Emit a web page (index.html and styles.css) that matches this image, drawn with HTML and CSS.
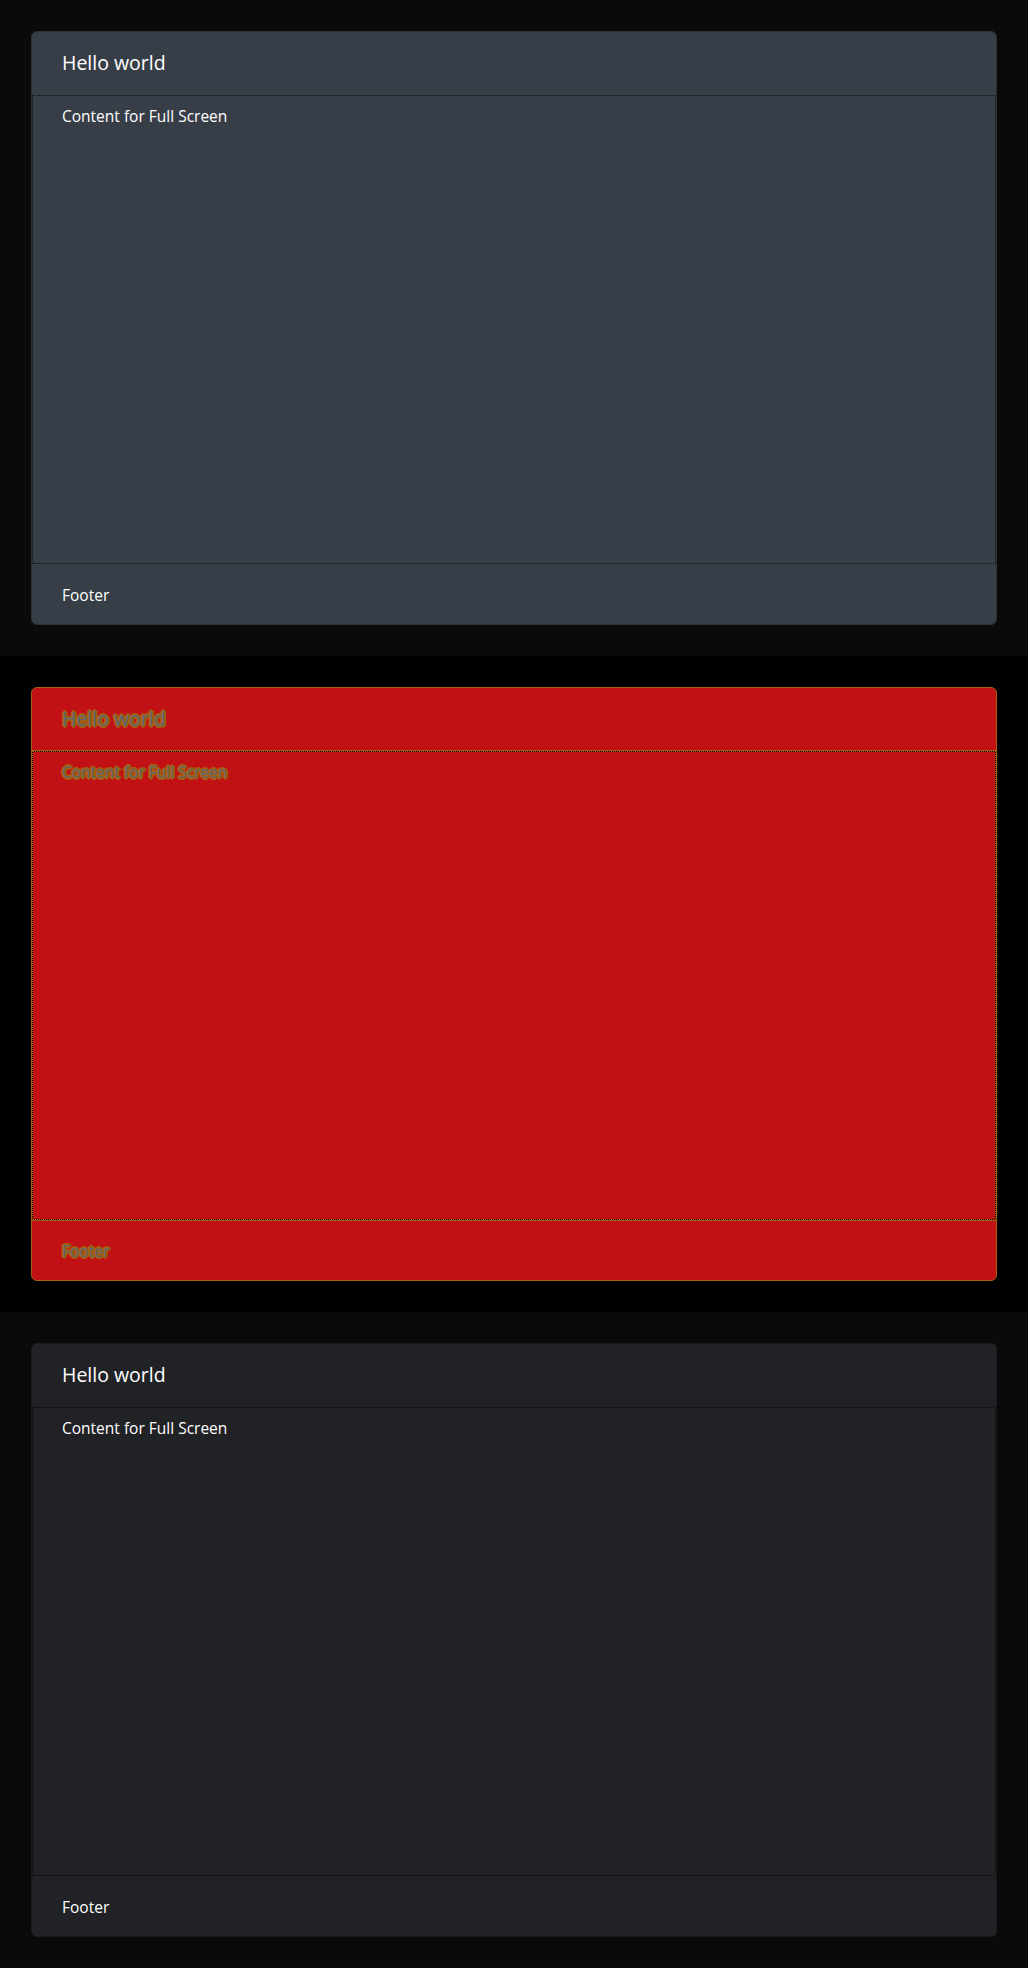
FILE: index.html
```html
<!DOCTYPE html>
<html lang="en">
<head>
<meta charset="utf-8">
<title>Full Screen Cards</title>
<link rel="stylesheet" href="styles.css">
</head>
<body>
  <section class="stage stage-slate">
    <div class="card">
      <div class="card-header"><h2 class="card-title">Hello world</h2></div>
      <div class="card-body"><p class="card-text">Content for Full Screen</p></div>
      <div class="card-footer"><span class="card-text">Footer</span></div>
    </div>
  </section>
  <section class="stage stage-debug">
    <div class="card">
      <div class="card-header"><h2 class="card-title">Hello world</h2></div>
      <div class="card-body"><p class="card-text">Content for Full Screen</p></div>
      <div class="card-footer"><span class="card-text">Footer</span></div>
    </div>
  </section>
  <section class="stage stage-dark">
    <div class="card">
      <div class="card-header"><h2 class="card-title">Hello world</h2></div>
      <div class="card-body"><p class="card-text">Content for Full Screen</p></div>
      <div class="card-footer"><span class="card-text">Footer</span></div>
    </div>
  </section>
</body>
</html>
```
FILE: styles.css
```css
* { box-sizing: border-box; }

html, body {
  margin: 0;
  padding: 0;
  background: #0a0a0a;
}

body {
  font-family: "Open Sans", "Noto Sans", sans-serif;
  color: #ffffff;
}

.stage {
  height: 656px;
  padding: 31px;
  display: flex;
  flex-direction: column;
  background: #0a0a0a;
}

.card {
  flex: 1;
  display: flex;
  flex-direction: column;
  border: 1px solid #2c3138;
  border-radius: 6px;
  overflow: hidden;
}

.card-header {
  height: 63px;
  padding: 0 30px;
  display: flex;
  align-items: center;
  border-bottom: 1px solid transparent;
}

.card-title {
  margin: 0;
  font-size: 19.5px;
  font-weight: 400;
  line-height: 1.2;
}

.card-body {
  flex: 1;
  padding: 8px 29px;
  border: 1px dotted rgba(0, 0, 0, 0.75);
}

.card-text {
  margin: 0;
  font-size: 15.5px;
  line-height: 24px;
}

.card-footer {
  height: 60px;
  padding: 0 30px;
  display: flex;
  align-items: center;
  border-top: 1px solid transparent;
}

/* slate theme */
.stage-slate .card { background: #373e47; }

/* dark theme */
.stage-dark .card {
  background: #212226;
  border-color: #1a1b1e;
}

/* debug / high contrast */
.stage-debug { background: #000; }

.stage-debug .card {
  background: #c11115;
  border-color: #a5600f;
}

.stage-debug .card-header { border-bottom-color: #a5600f; }
.stage-debug .card-footer { border-top-color: #a5600f; }

.stage-debug .card-body {
  border-color: #a5600f;
  background:
    linear-gradient(#c11115, #c11115) padding-box,
    linear-gradient(#000, #000) border-box;
}

.stage-debug .card-title,
.stage-debug .card-text {
  color: #5a6878;
  text-shadow:
    1px 0 0 #a5600f, -1px 0 0 #a5600f,
    0 1px 0 #a5600f, 0 -1px 0 #a5600f,
    1px 1px 0 #a5600f, -1px -1px 0 #a5600f,
    1px -1px 0 #a5600f, -1px 1px 0 #a5600f,
    2px 0 0 #a5600f, -2px 0 0 #a5600f,
    0 2px 0 #a5600f, 0 -2px 0 #a5600f;
}
```
